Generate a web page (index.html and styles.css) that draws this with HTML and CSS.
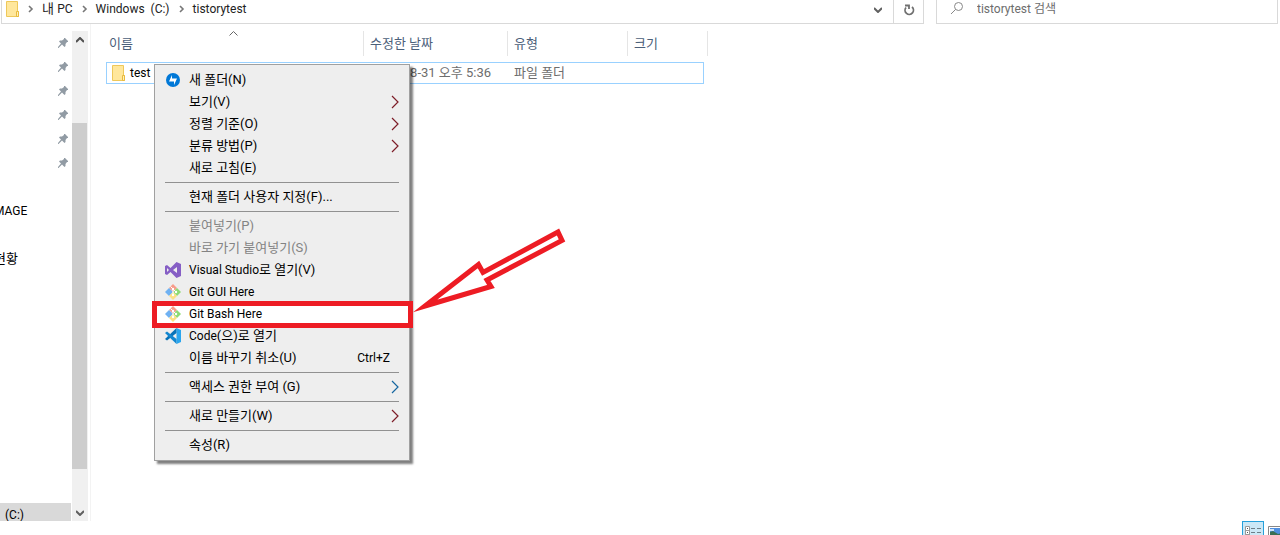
FILE: index.html
```html
<!DOCTYPE html>
<html lang="ko">
<head>
    <meta charset="UTF-8">
    <meta name="viewport" content="width=device-width, initial-scale=1.0">
    <title>tistorytest</title>
    <link rel="stylesheet" href="styles.css">
</head>
<body>
    <svg class="defs" width="0" height="0" aria-hidden="true">
        <symbol id="pin" viewBox="0 0 12 12">
            <path d="M7 1h1l3 3v1h-1L8.500 7v2l-1 1L5 7.500 1.500 11H1v-1L4 6.500 2 4.500l1-1h2L7 2z" fill="#919ba4"/>
        </symbol>
        <symbol id="folder" viewBox="0 0 14 16">
            <path d="M.5.5h11v10h1v5H.5z" fill="#ffe79c" stroke="#eec85a"/>
            <path d="M10.500 10.500h2v5h-2z" fill="#fff0ba" stroke="#e9bb3c"/>
        </symbol>
        <symbol id="crumb" viewBox="0 0 6 8">
            <path d="M1 1l3 3-3 3" fill="none" stroke="#777" stroke-width="1.600"/>
        </symbol>
        <symbol id="up" viewBox="0 0 8 6">
            <path d="M0 5l4-4 4 4" fill="none" stroke="#505050" stroke-width="2"/>
        </symbol>
        <symbol id="down" viewBox="0 0 8 6">
            <path d="M0 1l4 4 4-4" fill="none" stroke="#606060" stroke-width="2"/>
        </symbol>
        <symbol id="more" viewBox="0 0 8 14">
            <path d="M1 1l6 6-6 6" fill="none" stroke="currentColor" stroke-width="1.200"/>
        </symbol>
        <symbol id="git" viewBox="0 0 16 16">
            <path d="M8 0l4 4-4 4-4-4z" fill="#f79c8a"/>
            <path d="M4 4l4 4-4 4-4-4z" fill="#6fb1f2"/>
            <path d="M12 4l4 4-4 4-4-4z" fill="#8edb74"/>
            <path d="M8 8l4 4-4 4-4-4z" fill="#fbe084"/>
            <path d="M5.500 2.500L8 5v6M8 5l3 3" fill="none" stroke="#fff"/>
            <circle cx="8" cy="5" r="1.200" fill="#fff"/>
            <circle cx="8" cy="11" r="1.200" fill="#fff"/>
            <circle cx="11" cy="8" r="1.200" fill="#fff"/>
        </symbol>
    </svg>

    <header class="toolbar">
        <nav class="address">
            <svg class="folder" width="14" height="16"><use href="#folder"/></svg>
            <svg width="6" height="8"><use href="#crumb"/></svg>
            <a href="#">내 <span lang="en">PC</span></a>
            <svg width="6" height="8"><use href="#crumb"/></svg>
            <a href="#" lang="en">Windows &nbsp;(C:)</a>
            <svg width="6" height="8"><use href="#crumb"/></svg>
            <a href="#" lang="en">tistorytest</a>
            <button class="history" aria-label="이전 위치"><svg width="8" height="6"><use href="#down"/></svg></button>
            <button class="refresh" aria-label="새로 고침">
                <svg width="12" height="12" viewBox="0 0 12 12" fill="none" stroke="#707070" stroke-width="1.800">
                    <path d="M9 3A4.200 4.200 0 1 1 3 3.500"/>
                    <path d="M2 1.500h4V5"/>
                </svg>
            </button>
        </nav>
        <label class="search">
            <svg width="14" height="13" viewBox="0 0 14 13" fill="none" stroke="#888">
                <circle cx="8.500" cy="4.500" r="4"/>
                <path d="M5.500 7.500L1 12"/>
            </svg>
            <input type="text" placeholder="tistorytest 검색" aria-label="tistorytest 검색">
        </label>
    </header>

    <div class="content">
        <aside class="sidebar">
            <ul class="tree">
                <li><svg width="12" height="12"><use href="#pin"/></svg></li>
                <li><svg width="12" height="12"><use href="#pin"/></svg></li>
                <li><svg width="12" height="12"><use href="#pin"/></svg></li>
                <li><svg width="12" height="12"><use href="#pin"/></svg></li>
                <li><svg width="12" height="12"><use href="#pin"/></svg></li>
                <li><svg width="12" height="12"><use href="#pin"/></svg></li>
                <li></li>
                <li class="cut" lang="en">MAGE</li>
                <li></li>
                <li class="cut">현황</li>
                <li class="selected" lang="en">(C:)</li>
            </ul>
            <div class="scrollbar">
                <button aria-label="위로"><svg width="8" height="6"><use href="#up"/></svg></button>
                <div class="track"><div class="thumb"></div></div>
                <button aria-label="아래로"><svg width="8" height="6"><use href="#down"/></svg></button>
            </div>
        </aside>

        <main class="files">
            <table>
                <colgroup>
                    <col class="col-name"><col class="col-date"><col class="col-type"><col class="col-size"><col class="col-end">
                </colgroup>
                <thead>
                    <tr>
                        <th>이름<svg class="sort" width="9" height="5" viewBox="0 0 9 5"><path d="M.5 4.500l4-4 4 4" fill="none" stroke="#666"/></svg></th>
                        <th>수정한 날짜</th>
                        <th>유형</th>
                        <th class="open">크기</th>
                        <th></th>
                    </tr>
                </thead>
                <tbody>
                    <tr>
                        <td class="name"><span lang="en"><svg width="14" height="16"><use href="#folder"/></svg>test</span></td>
                        <td>2021-08-31 오후 5:36</td>
                        <td>파일 폴더</td>
                        <td class="last"></td>
                        <td class="none"></td>
                    </tr>
                </tbody>
            </table>
        </main>
    </div>

    <footer class="statusbar">
        <button class="view active" aria-label="자세히">
            <svg width="16" height="16" viewBox="0 0 16 16" fill="none">
                <path d="M.5.5h4v4h-4zM.5 4.500h4v4h-4zM.5 8.500h4v4h-4z" fill="#fff" stroke="#999"/>
                <path d="M2 2.500h1M2 6.500h1" stroke="#555"/>
                <path d="M6 2.500h4M12 2.500h4M6 6.500h4M12 6.500h4" stroke="#6d7f88"/>
            </svg>
        </button>
        <button class="view" aria-label="큰 아이콘">
            <svg width="16" height="14" viewBox="0 0 16 14">
                <path d="M.5.5h15v13H.5z" fill="#fff" stroke="#888"/>
                <path d="M2 2h12v10H2z" fill="#4f8fe0"/>
                <path d="M2 6l3-1 5 3 4-1v5H2z" fill="#3b6f54"/>
                <path d="M2 3h4v2H2z" fill="#cfe4fa"/>
            </svg>
        </button>
    </footer>

    <div class="menu">
        <button>
            <svg class="icon" width="16" height="16" viewBox="0 0 16 16"><circle cx="8" cy="8" r="7" fill="#0078d7"/><path d="M7 3v3.500h5L9 13V9.500H4z" fill="#fff"/></svg>
            새 폴더(N)
        </button>
        <button>보기(V)<svg class="more" width="8" height="14"><use href="#more"/></svg></button>
        <button>정렬 기준(O)<svg class="more" width="8" height="14"><use href="#more"/></svg></button>
        <button>분류 방법(P)<svg class="more" width="8" height="14"><use href="#more"/></svg></button>
        <button>새로 고침(E)</button>
        <hr>
        <button>현재 폴더 사용자 지정(F)...</button>
        <hr>
        <button disabled>붙여넣기(P)</button>
        <button disabled>바로 가기 붙여넣기(S)</button>
        <button>
            <svg class="icon" width="16" height="16" viewBox="0 0 16 16"><path d="M11.500 0L16 2v12l-4.500 2L5.500 10 2 13l-2-1V4l2-1 3.500 3zM12 5L8 8l4 3zM2 6v4l2-2z" fill="#865fc5" fill-rule="evenodd"/></svg>
            <span lang="en">Visual Studio</span>로 열기(V)
        </button>
        <button lang="en"><svg class="icon" width="16" height="16"><use href="#git"/></svg>Git GUI Here</button>
        <button class="marked" lang="en"><svg class="icon" width="16" height="16"><use href="#git"/></svg>Git Bash Here</button>
        <button>
            <svg class="icon" width="16" height="16" viewBox="0 0 16 16">
                <path d="M11.500 0L16 2v12l-4.500 2z" fill="#2aa5ee"/>
                <path d="M11.500 0v5L2 12.500 0 11z" fill="#0873b9"/>
                <path d="M0 5l2-1.500 9.500 7.500v5z" fill="#1287d0"/>
            </svg>
            <span lang="en">Code</span>(으)로 열기
        </button>
        <button>이름 바꾸기 취소(U)<span class="shortcut" lang="en">Ctrl+Z</span></button>
        <hr>
        <button>액세스 권한 부여 (G)<svg class="more blue" width="8" height="14"><use href="#more"/></svg></button>
        <hr>
        <button>새로 만들기(W)<svg class="more" width="8" height="14"><use href="#more"/></svg></button>
        <hr>
        <button>속성(R)</button>
    </div>

    <svg class="arrow" width="160" height="100" viewBox="0 0 160 100">
        <path d="M15 81L68.500 39.500 73 47.500 148 7 152 15.500 77 55 81 61.500z" fill="#fff" stroke="#ed1c24" stroke-width="5" stroke-miterlimit="10"/>
    </svg>
</body>
</html>
```
FILE: styles.css
```css
* {
    box-sizing: border-box;
}
body {
    display: flex;
    flex-direction: column;
    height: 100vh;
    margin: 0;
    overflow: hidden;
    background-color: #fff;
    color: #000;
    font-family: Roboto, "Noto Sans CJK KR", sans-serif;
    font-size: 13px;
    line-height: 18px;
}
/* latin words sit a size below the hangul */
[lang="en"],
.menu [lang="en"] {
    font-size: 12px;
}
button,
input {
    border: none;
    background: none;
    padding: 0;
    color: inherit;
    font: inherit;
}
svg {
    flex: none;
}
.defs {
    position: absolute;
}
.toolbar {
    display: flex;
    gap: 12px;
    height: 24px;
    padding: 0 2px 0 1px;
}
.address {
    display: flex;
    flex: 1;
    align-items: center;
    gap: 8px;
    border: 1px solid #d9d9d9;
    border-top: none;
    padding: 0 0 6px 4px;
}
.address a {
    color: #222;
    text-decoration: none;
    white-space: nowrap;
}
.address a + svg {
    margin-left: 1px;
}
.address button {
    display: flex;
    align-items: center;
    justify-content: center;
    width: 30px;
    height: 23px;
    margin-bottom: -6px;
    padding-bottom: 4px;
}
.address .history {
    margin-left: auto;
}
.address .refresh {
    margin-left: -8px;
    border-left: 1px solid #d9d9d9;
}
.search {
    display: flex;
    align-items: center;
    gap: 13px;
    width: 342px;
    border: 1px solid #d9d9d9;
    border-top: none;
    padding: 0 13px 6px;
}
.search input {
    flex: 1;
    height: 18px;
    outline: none;
    font-size: 12px;
}
.search input::placeholder {
    color: #6d6d6d;
}
.content {
    display: flex;
    flex: 1;
    min-height: 0;
}
.sidebar {
    display: flex;
    width: 91px;
    padding-top: 7px;
    border-right: 1px solid #f3f3f3;
}
.tree {
    display: flex;
    flex: 1;
    flex-direction: column;
    margin: 0;
    padding: 0;
    overflow: hidden;
    list-style: none;
}
.tree li {
    display: flex;
    flex: none;
    align-items: center;
    height: 24px;
    margin-right: 1px;
    white-space: nowrap;
}
.tree li svg {
    margin-left: 57px;
}
.tree .cut {
    margin-left: -6px;
}
.tree .selected {
    height: 18px;
    margin-top: auto;
    padding-left: 5px;
    background-color: #d9d9d9;
    line-height: 24px;
    align-items: flex-start;
}
.scrollbar {
    display: flex;
    flex-direction: column;
    width: 16px;
    margin-right: 2px;
    background-color: #f0f0f0;
}
.scrollbar button {
    height: 17px;
    line-height: 0;
}
.track {
    flex: 1;
    padding: 75px 1px 35px 0;
}
.thumb {
    height: 100%;
    background-color: #cdcdcd;
}
.files {
    flex: 1;
    padding: 7px 0 0 15px;
}
table {
    width: 602px;
    border-spacing: 0;
    table-layout: fixed;
}
.col-name {
    width: 258px;
}
.col-date {
    width: 144px;
}
.col-type {
    width: 120px;
}
.col-size {
    width: 76px;
}
.col-end {
    width: 4px;
}
th {
    position: relative;
    height: 25px;
    padding: 0 0 0 6px;
    border-right: 1px solid #e5e5e5;
    color: #4c607a;
    font-weight: normal;
    text-align: left;
}
th:first-child {
    padding-left: 3px;
}
th.open {
    border-right: none;
}
th:last-child {
    padding: 0;
}
.sort {
    position: absolute;
    top: 0;
    left: 123px;
}
tbody::before {
    content: "";
    display: block;
    height: 6px;
}
td {
    height: 22px;
    padding: 0 0 0 6px;
    border: solid #99d1ff;
    border-width: 1px 0;
    color: #6d6d6d;
    white-space: nowrap;
}
td.name {
    padding-left: 5px;
    border-left-width: 1px;
    color: #000;
}
.name span {
    display: flex;
    align-items: center;
    gap: 4px;
}
td.last {
    border-right-width: 1px;
}
td.none {
    padding: 0;
    border: none;
}
.statusbar {
    display: flex;
    flex: none;
    justify-content: flex-end;
    gap: 4px;
    height: 14px;
    margin-right: -4px;
}
.view {
    display: flex;
    flex: none;
    justify-content: center;
    align-items: flex-start;
    width: 16px;
    height: 24px;
    padding-top: 5px;
}
.view.active {
    width: 22px;
    padding-top: 4px;
    border: 1px solid #26a0da;
    background-color: #cbe8f6;
}
.menu {
    position: absolute;
    top: 64px;
    left: 154px;
    width: 256px;
    padding: 3px 0 5px;
    border: 1px solid #a0a0a0;
    background-color: #eee;
    box-shadow: 3px 3px 2px rgba(0, 0, 0, 0.5);
}
.menu button {
    position: relative;
    display: flex;
    align-items: center;
    width: 100%;
    height: 22px;
    padding: 2px 10px 0 34px;
    white-space: nowrap;
}
.menu button:disabled {
    color: #838383;
}
.menu hr {
    height: 1px;
    margin: 4px 10px 2px;
    border: none;
    background-color: #919191;
}
.icon {
    margin: 0 8px 0 -24px;
}
.more {
    margin-left: auto;
    color: #7d1d28;
}
.more.blue {
    color: #1566a0;
}
.shortcut {
    margin-left: auto;
    padding-right: 9px;
}
.menu .marked {
    background-color: #fff;
}
.marked::after {
    content: "";
    position: absolute;
    z-index: 1;
    top: -1px;
    right: -4px;
    bottom: -4px;
    left: -3px;
    border: 5px solid #ed1c24;
}
.arrow {
    position: absolute;
    top: 225px;
    left: 410px;
}
```
